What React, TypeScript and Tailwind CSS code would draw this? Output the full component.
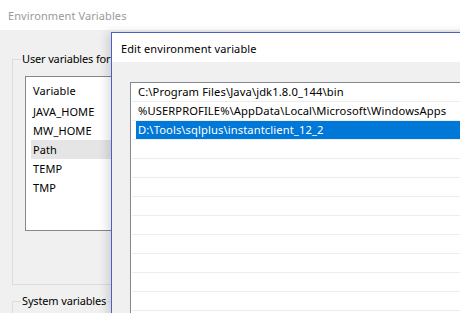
import React from "react";

const font = { fontFamily: '"Noto Sans", "Open Sans", sans-serif' };

export default function App() {
  const userVars = ["JAVA_HOME", "MW_HOME", "Path", "TEMP", "TMP"];
  const paths = [
    "C:\\Program Files\\Java\\jdk1.8.0_144\\bin",
    "%USERPROFILE%\\AppData\\Local\\Microsoft\\WindowsApps",
    "D:\\Tools\\sqlplus\\instantclient_12_2",
  ];
  const emptyRows = Array.from({ length: 10 });
  return (
    <div
      className="relative w-[460px] h-[313px] overflow-hidden bg-[#f0f0f0] text-[11px] tracking-[0.1px] leading-none text-black"
      style={font}
    >
      {/* Outer window title */}
      <div className="h-[30px] bg-white flex items-center pl-[8px] text-[#999999] text-[11px]">
        Environment Variables
      </div>

      {/* Outer window body */}
      <div className="pl-[12px] pt-[22px] flex flex-col">
        <fieldset className="w-[440px] h-[233px] border border-[#dcdcdc] p-0 pt-[10px] m-0 min-w-0">
          <legend className="ml-[8px] px-[1px] leading-[14px] text-[11px] tracking-[-0.15px]">User variables for</legend>
          <div className="ml-[12px] w-[120px] h-[155px] border border-[#828790] bg-white">
            <div className="h-[25px] flex items-center pl-[7px] pt-[2px]">Variable</div>
            {userVars.map((v) => (
              <div
                key={v}
                className={`h-[19px] ml-[5px] pl-[2px] flex items-center ${
                  v === "Path" ? "bg-[#e5e5e5]" : ""
                }`}
              >
                {v}
              </div>
            ))}
          </div>
        </fieldset>
        <fieldset className="w-[440px] h-[40px] border border-[#dcdcdc] p-0 mt-[9px] m-0 min-w-0">
          <legend className="ml-[8px] px-[1px] leading-[14px] text-[11px] tracking-[-0.15px]">System variables</legend>
        </fieldset>
      </div>

      {/* Edit environment variable dialog (overlapping window) */}
      <div className="absolute left-[111px] top-[32px] w-[400px] h-[320px] border border-[#4a5fc8] bg-[#f0f0f0] shadow-[-4px_0_9px_rgba(0,0,0,0.13)] flex flex-col">
        <div className="h-[29px] bg-white flex items-center pl-[9px] pt-[1px] text-[11px]">
          Edit environment variable
        </div>
        <div className="pl-[18px] pt-[20px]">
          <div className="w-[360px] h-[260px] border border-[#828790] bg-white px-[1px] flex flex-col text-[11.2px]">
            {paths.map((p, i) => (
              <div key={p} className="h-[19px] border-b border-[#ececec] flex shrink-0">
                <div
                  className={`flex-1 ml-[4px] pl-[2px] flex items-center whitespace-nowrap ${
                    i === 2 ? "bg-[#0078d7] text-white" : ""
                  }`}
                >
                  {p}
                </div>
              </div>
            ))}
            {emptyRows.map((_, i) => (
              <div key={i} className="h-[19px] border-b border-[#ececec] shrink-0" />
            ))}
          </div>
        </div>
      </div>
    </div>
  );
}
